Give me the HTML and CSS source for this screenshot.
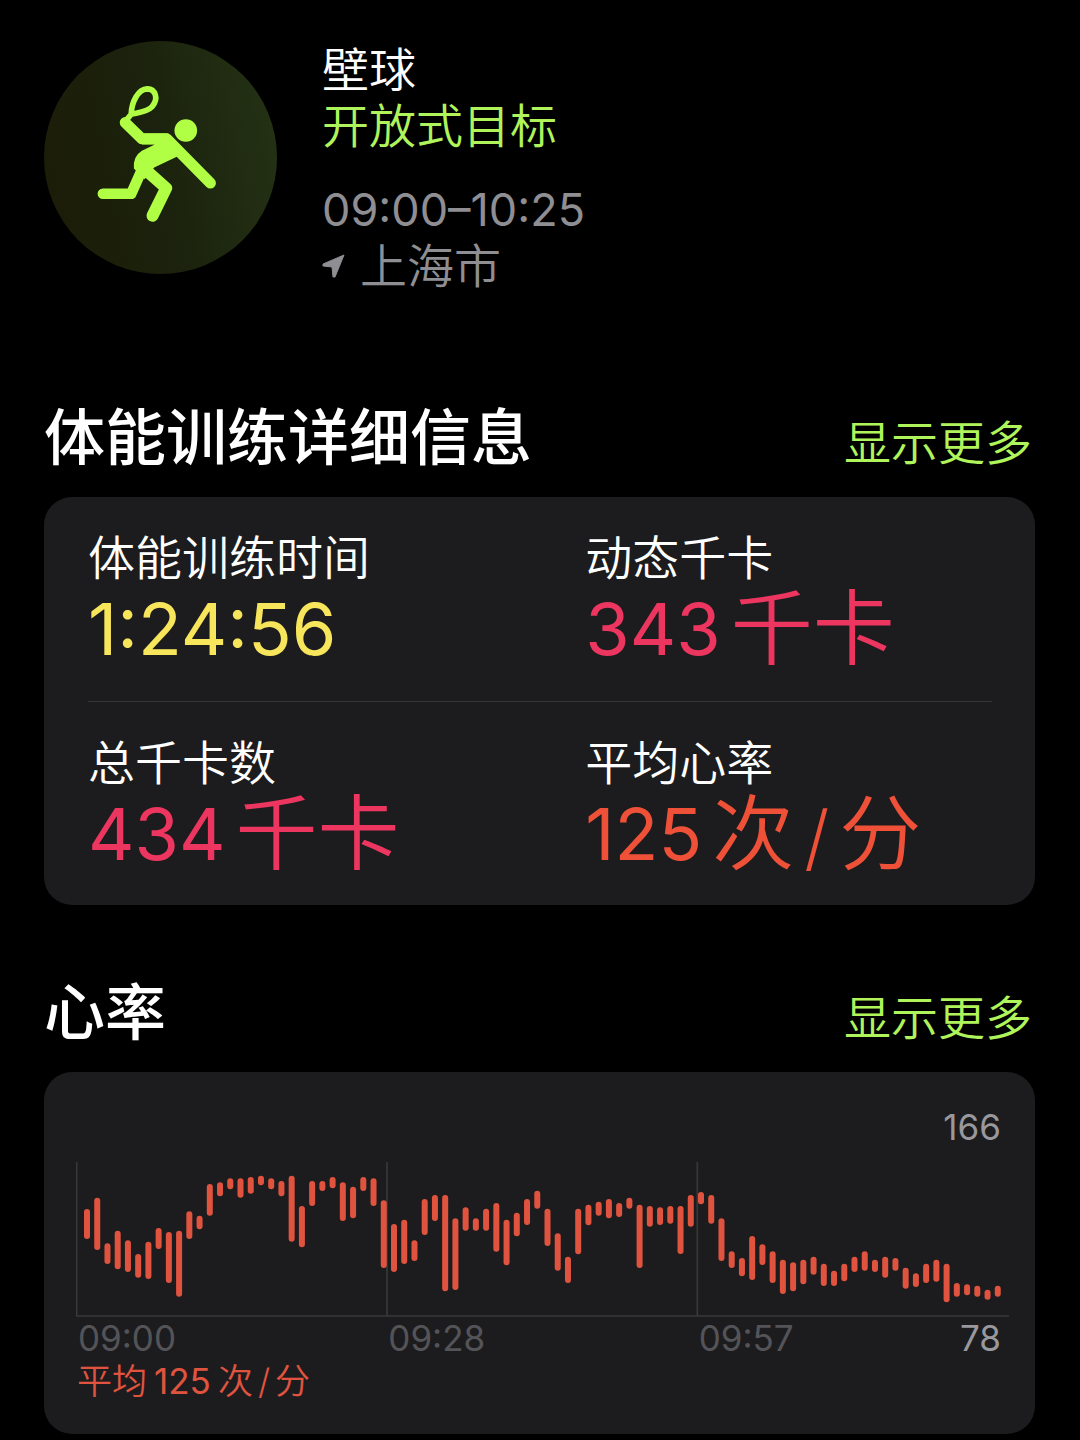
FILE: index.html
```html
<!DOCTYPE html>
<html lang="zh-CN">
<head>
    <meta charset="UTF-8">
    <meta name="viewport" content="width=device-width, initial-scale=1.0">
    <title>壁球</title>
    <link rel="stylesheet" href="styles.css">
</head>
<body>
    <header class="workout">
        <svg class="workout-icon" viewBox="41 32 700 700" aria-hidden="true">
            <defs>
                <linearGradient id="badge" x1="0" y1="0.6" x2="1" y2="0.4">
                    <stop offset="0" stop-color="#1c1d08"/>
                    <stop offset="0.5" stop-color="#1b220d"/>
                    <stop offset="1" stop-color="#243114"/>
                </linearGradient>
            </defs>
            <circle cx="391" cy="382" r="350" fill="url(#badge)"/>
            <g fill="none" stroke="#b0ff45" stroke-linecap="round" stroke-linejoin="round">
                <path stroke-width="17" d="M303 252C304 214 324 177 351 176C376 177 386 204 366 229C350 246 322 247 303 252L288 270"/>
                <path stroke-width="33" d="M285 277L335 326H410L541 459"/>
                <path stroke-width="32" d="M218 491H303L340 408"/>
                <path stroke-width="36" d="M345 418L408 474L367 557"/>
            </g>
            <path fill="#b0ff45" d="M335 310H414L462 362L440 380L372 412L343 447L311 415Q308 379 335 362L374 343H335Z"/>
            <circle cx="467" cy="301" r="34" fill="#b0ff45"/>
        </svg>
        <div class="workout-info">
            <h1 class="workout-name">壁球</h1>
            <p class="workout-goal">开放式目标</p>
            <p class="workout-time">09:00–10:25</p>
            <p class="workout-place">
                <svg class="arrow" viewBox="0 0 23 24" aria-hidden="true">
                    <path d="M22 1L13 23H11L10 13L1 12V10Z"/>
                </svg>
                上海市
            </p>
        </div>
    </header>

    <section class="section">
        <div class="section-head">
            <h2>体能训练详细信息</h2>
            <a class="more" href="#">显示更多</a>
        </div>
        <div class="card">
            <div class="stat-row">
                <div class="stat">
                    <p class="stat-label">体能训练时间</p>
                    <p class="stat-value yellow">1:24:56</p>
                </div>
                <div class="stat">
                    <p class="stat-label">动态千卡</p>
                    <p class="stat-value pink">343<span class="unit">千卡</span></p>
                </div>
            </div>
            <div class="stat-row">
                <div class="stat">
                    <p class="stat-label">总千卡数</p>
                    <p class="stat-value pink">434<span class="unit">千卡</span></p>
                </div>
                <div class="stat">
                    <p class="stat-label">平均心率</p>
                    <p class="stat-value red">125<span class="unit">次<span class="slash">/</span>分</span></p>
                </div>
            </div>
        </div>
    </section>

    <section class="section">
        <div class="section-head">
            <h2>心率</h2>
            <a class="more" href="#">显示更多</a>
        </div>
        <div class="card chart-card">
            <p class="chart-max">166</p>
            <svg class="chart" viewBox="0 0 2799 465" role="img" aria-label="心率">
                <path class="grid" d="M2 0V462M933 0V462M1864 0V462"/>
                <path class="axis" d="M0 462H2799"/>
                <g id="bars"></g>
            </svg>
            <div class="chart-labels">
                <span>09:00</span>
                <span>09:28</span>
                <div class="chart-end">
                    <span>09:57</span>
                    <span class="chart-min">78</span>
                </div>
            </div>
            <p class="chart-average">平均<span class="average-number">125</span>次<span class="average-slash">/</span>分</p>
        </div>
    </section>

    <script>
        // top and bottom of every bar, in chart units
        const ranges = [
            [141, 231], [107, 264], [244, 306], [206, 322], [235, 330], [276, 347], [239, 351], [198, 261], [210, 363], [206, 404],
            [148, 231], [161, 202], [66, 161], [61, 103], [49, 82], [49, 107], [45, 95], [41, 70], [49, 82], [57, 103],
            [41, 239], [132, 256], [57, 132], [57, 87], [45, 79], [61, 177], [74, 169], [45, 87], [49, 132], [115, 318],
            [186, 330], [173, 306], [235, 297], [111, 219], [99, 177], [99, 388], [169, 384], [136, 206], [169, 206], [140, 206],
            [123, 269], [173, 310], [152, 223], [111, 189], [86, 140], [140, 252], [214, 326], [284, 363], [140, 277], [128, 190],
            [119, 161], [111, 169], [123, 165], [107, 140], [128, 318], [132, 194], [136, 189], [132, 185], [132, 276], [99, 194],
            [90, 127], [99, 185], [169, 297], [268, 318], [288, 343], [222, 354], [247, 309], [268, 363], [293, 396], [301, 388],
            [293, 367], [284, 338], [305, 372], [326, 372], [305, 358], [284, 330], [268, 326], [293, 330], [284, 347], [288, 326],
            [317, 380], [334, 375], [305, 363], [293, 359], [305, 421], [363, 404], [367, 400], [371, 404], [383, 413], [371, 404]
        ];
        const bars = document.getElementById('bars');

        ranges.forEach(([top, bottom], i) => {
            const bar = document.createElementNS('http://www.w3.org/2000/svg', 'rect');
            bar.setAttribute('class', 'bar');
            bar.setAttribute('x', 24 + i * 30.7);
            bar.setAttribute('y', top);
            bar.setAttribute('width', 18);
            bar.setAttribute('height', bottom - top);
            bar.setAttribute('rx', 9);
            bars.appendChild(bar);
        });
    </script>
</body>
</html>
```
FILE: styles.css
```css
* {
    box-sizing: border-box;
}

body {
    font-family: Inter, "Noto Sans CJK SC", sans-serif;
    font-weight: 350;
    background-color: #000;
    color: #fff;
    margin: 0;
    padding: 41px 45px 5px 44px;
}

h1, h2, p {
    margin: 0;
}

.workout {
    display: flex;
    align-items: flex-start;
    gap: 45px;
}

.workout-icon {
    width: 233px;
    height: 233px;
    flex: none;
}

.workout-info {
    font-size: 47px;
    line-height: 56px;
    padding-top: 1px;
}

.workout-name {
    font-size: 47px;
    font-weight: 350;
}

.workout-goal {
    color: #b0f45c;
}

.workout-time {
    color: #8e8e93;
    font-size: 45px;
    font-weight: 400;
    margin-top: 28px;
}

.workout-place {
    display: flex;
    align-items: center;
    gap: 15px;
    color: #8e8e93;
}

.arrow {
    width: 23px;
    height: 24px;
    fill: #8e8e93;
    stroke: #8e8e93;
    stroke-linejoin: round;
}

.section-head {
    display: flex;
    justify-content: space-between;
    align-items: baseline;
    height: 100px;
    padding-right: 3px;
}

.section {
    margin-top: 67px;
}

.workout + .section {
    margin-top: 103px;
}

h2 {
    font-size: 61px;
    font-weight: 500;
    line-height: 82px;
}

.more {
    color: #b0f45c;
    font-size: 47px;
    line-height: 56px;
    text-decoration: none;
}

.card {
    background: #1c1c1e;
    border-radius: 28px;
    padding: 0 43px 0 44px;
}

.stat-row {
    display: grid;
    grid-template-columns: 55% 45%;
    padding: 33px 0 31px;
    height: 204px;
}

.stat-row + .stat-row {
    border-top: 1px solid #343436;
}

.stat-label {
    font-size: 47px;
    line-height: 56px;
}

.stat-value {
    font-size: 72px;
    font-weight: 400;
    line-height: 86px;
    white-space: nowrap;
}

.unit {
    font-size: 82px;
    font-weight: 350;
    line-height: 0;
    vertical-align: -3px;
    margin-left: 10px;
}

.slash {
    font-size: 72px;
    margin: 0 10px;
}

.yellow {
    color: #f7e55c;
}

.pink {
    color: #ec3660;
}

.red {
    color: #ee5138;
}

.chart-card {
    font-size: 35px;
    font-weight: 400;
    line-height: 43px;
    padding: 34px 26px 31px 32px;
}

.chart-max {
    color: #98989d;
    text-align: right;
    padding-right: 8px;
}

.chart {
    display: block;
    width: 100%;
    margin-top: 13px;
}

.grid, .axis {
    fill: none;
    stroke: #38383a;
    stroke-width: 5;
}

.bar {
    fill: #e0543f;
}

.chart-labels {
    display: grid;
    grid-template-columns: 1fr 1fr 1fr;
    color: #545458;
    padding-left: 2px;
}

.chart-end {
    display: flex;
    justify-content: space-between;
    padding-right: 8px;
}

.chart-min {
    color: #98989d;
}

.chart-average {
    color: #e0543f;
    font-weight: 350;
    padding-left: 1px;
}

.average-number {
    font-weight: 400;
    margin: 0 7px;
}

.average-slash {
    margin: 0 5px;
}
```
